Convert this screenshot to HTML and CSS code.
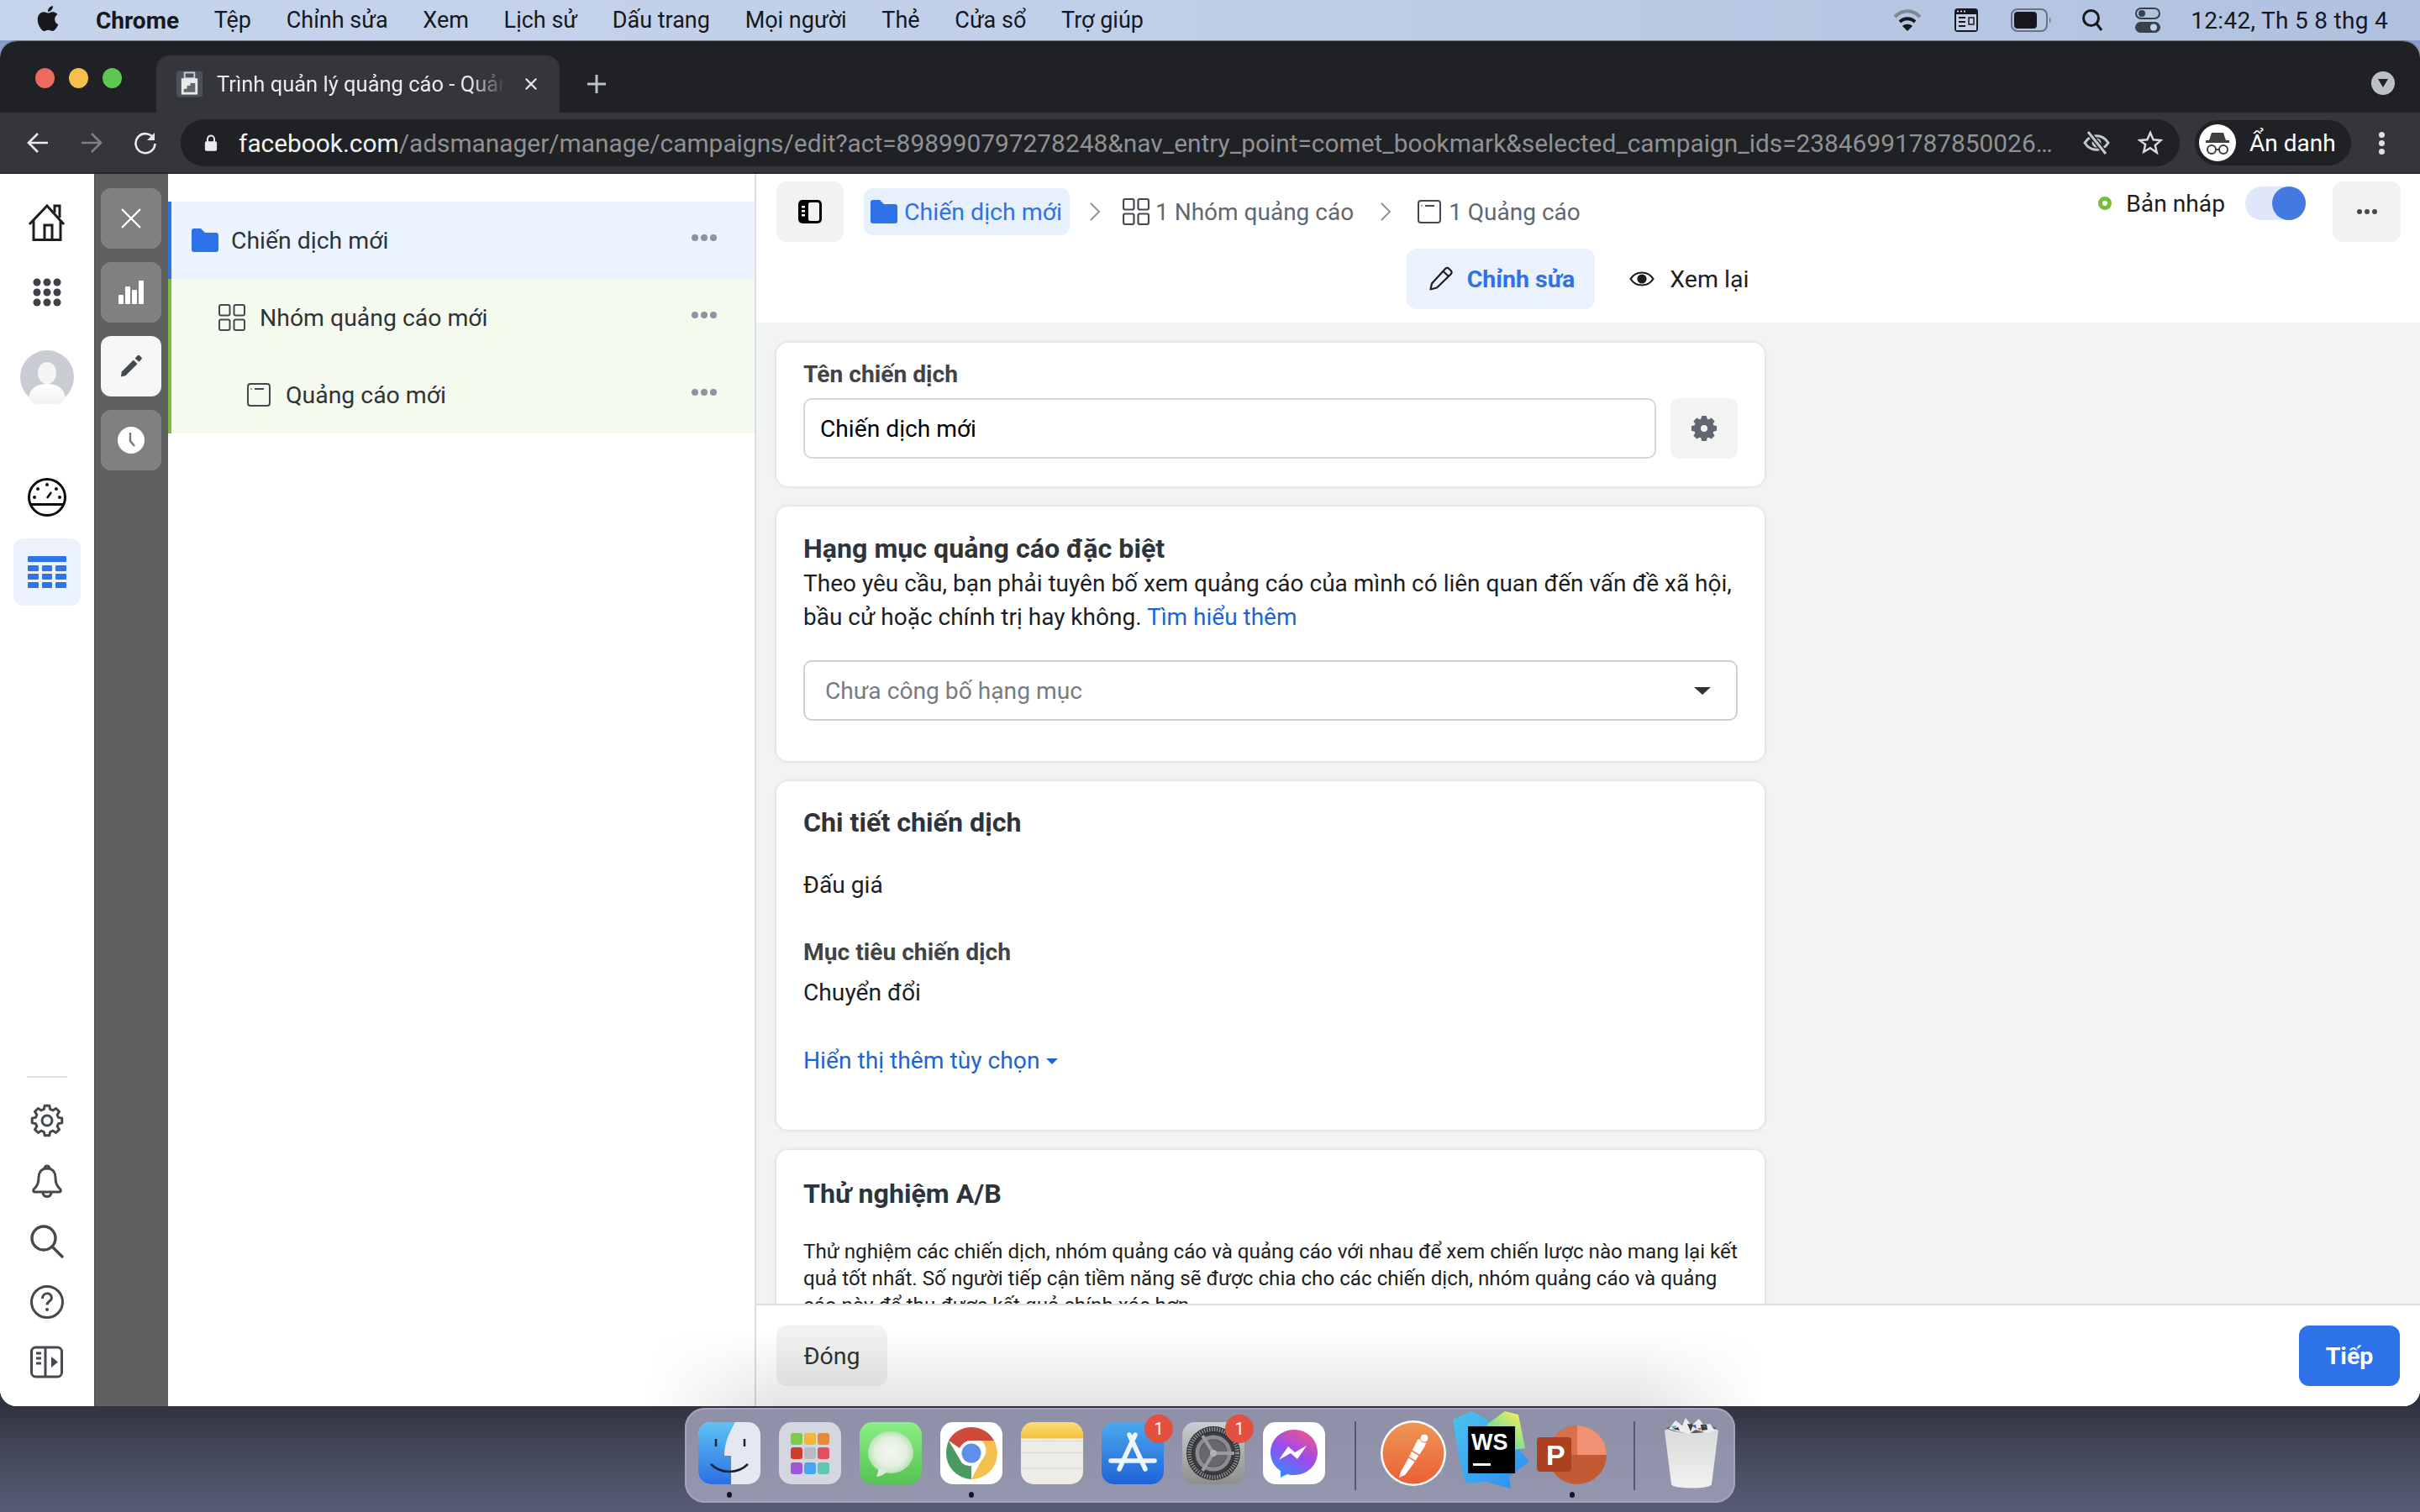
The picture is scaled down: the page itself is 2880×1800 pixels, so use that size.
FILE: index.html
```html
<!DOCTYPE html>
<html lang="vi">
<head>
<meta charset="utf-8">
<title>Trình quản lý quảng cáo</title>
<link rel="stylesheet" href="styles.css">
</head>
<body>
<header class="menubar">
  <svg class="apple" viewBox="0 0 24 24"><path fill="#16181d" d="M12.152 6.896c-.948 0-2.415-1.078-3.96-1.04-2.04.027-3.91 1.183-4.961 3.014-2.117 3.675-.546 9.103 1.519 12.09 1.013 1.454 2.208 3.09 3.792 3.039 1.52-.065 2.09-.987 3.935-.987 1.831 0 2.35.987 3.96.948 1.637-.026 2.676-1.48 3.676-2.948 1.156-1.688 1.636-3.325 1.662-3.415-.039-.013-3.182-1.221-3.22-4.857-.026-3.04 2.48-4.494 2.597-4.559-1.429-2.09-3.623-2.324-4.39-2.376-2-.156-3.675 1.09-4.61 1.09zM15.53 3.83c.843-1.012 1.4-2.427 1.245-3.83-1.207.052-2.662.805-3.532 1.818-.78.896-1.454 2.338-1.273 3.714 1.338.104 2.715-.688 3.559-1.701"/></svg>
  <nav class="menus">
    <span class="menu-app">Chrome</span><span>Tệp</span><span>Chỉnh sửa</span><span>Xem</span><span>Lịch sử</span><span>Dấu trang</span><span>Mọi người</span><span>Thẻ</span><span>Cửa sổ</span><span>Trợ giúp</span>
  </nav>
  <div class="status-icons">
    <svg class="si-wifi" viewBox="0 0 34 28" fill="none"><path d="M2 10C11 1 23 1 32 10" stroke="#7f8795" stroke-width="4"/><path d="M8 16C13 11 21 11 26 16" stroke="#16181d" stroke-width="4"/><path d="M17 27l-6-6c3-3 9-3 12 0z" fill="#16181d"/></svg>
    <svg class="si-cmd" viewBox="0 0 30 30"><rect x="1" y="1" width="28" height="28" rx="4" fill="#16181d"/><rect x="3" y="8" width="24" height="19" fill="#c3cfe6"/><path d="M6 12h8M6 17h8M6 22h8" stroke="#16181d" stroke-width="2"/><circle cx="5" cy="4.500" r="1" fill="#fff"/><circle cx="9" cy="4.500" r="1" fill="#fff"/><circle cx="13" cy="4.500" r="1" fill="#fff"/><path d="M18 12h6v8h-6zM18 12a2 2 0 1 1-0 0M24 20a2 2 0 1 1 0 0" fill="none" stroke="#16181d" stroke-width="1.500"/></svg>
    <svg class="si-batt" viewBox="0 0 48 28"><rect x="1" y="1" width="42" height="26" rx="7" fill="none" stroke="#6b7282" stroke-width="2"/><rect x="4" y="4" width="27" height="20" rx="4" fill="#16181d"/><path d="M46 10c2 2 2 6 0 8z" fill="#6b7282"/></svg>
    <svg class="si-search" viewBox="0 0 26 28" fill="none" stroke="#16181d" stroke-width="3"><circle cx="11.500" cy="11.500" r="9"/><path d="M18 18l6 8"/></svg>
    <svg class="si-ctrl" viewBox="0 0 30 30"><rect x="1" y="1" width="28" height="12" rx="6" fill="none" stroke="#3a3f4c" stroke-width="2"/><circle cx="8" cy="7" r="4" fill="#3a3f4c"/><rect x="0" y="17" width="30" height="13" rx="6.500" fill="#3a3f4c"/><circle cx="22" cy="23.500" r="4" fill="#c3cfe6"/></svg>
    <span class="clock">12:42, Th 5 8 thg 4</span>
  </div>
</header>

<div class="window">
  <div class="tabstrip">
    <div class="lights"><i class="l-red"></i><i class="l-yellow"></i><i class="l-green"></i></div>
    <div class="tab">
      <svg class="favicon" viewBox="0 0 32 32"><rect width="32" height="32" rx="3" fill="#4b505c"/><rect x="10" y="2" width="12" height="7" fill="none" stroke="#c9ccd2" stroke-width="2"/><rect x="6" y="9" width="20" height="20" fill="#e8e9eb"/><path d="M9 26v-4h4v-4h4v-3h6v11z" fill="#63666e"/></svg>
      <span class="tab-title">Trình quản lý quảng cáo - Quản lý</span>
      <svg class="tab-x" viewBox="0 0 18 18"><path d="M2 2l14 14M16 2L2 16" stroke="#e8eaed" stroke-width="2.400"/></svg>
    </div>
    <svg class="tab-plus" viewBox="0 0 24 24"><path d="M12 1v22M1 12h22" stroke="#bdc1c6" stroke-width="3"/></svg>
    <div class="tab-down"><i></i></div>
  </div>
  <div class="toolbar">
    <svg class="tb-icon" viewBox="0 0 28 28" fill="none" stroke="#e8eaed" stroke-width="2.600"><path d="M26 14H3M14 3L3 14l11 11"/></svg>
    <svg class="tb-icon" viewBox="0 0 28 28" fill="none" stroke="#7d8084" stroke-width="2.600"><path d="M2 14h23M14 3l11 11-11 11"/></svg>
    <svg class="tb-icon" viewBox="0 0 28 28" fill="none" stroke="#e8eaed" stroke-width="2.600"><path d="M24 9A11.500 11.500 0 1 0 25.500 15"/><path d="M25 2v9h-9" stroke-width="0" fill="#e8eaed"/></svg>
    <div class="omnibox">
      <svg class="lock" viewBox="0 0 18 24"><path d="M4.500 11V7a4.500 4.500 0 0 1 9 0v4" fill="none" stroke="#e8eaed" stroke-width="2.200"/><rect x="1" y="10" width="16" height="13" rx="2" fill="#e8eaed"/></svg>
      <div class="url"><b>facebook.com</b>/adsmanager/manage/campaigns/edit?act=898990797278248&amp;nav_entry_point=comet_bookmark&amp;selected_campaign_ids=23846991787850026…</div>
      <svg class="om-eye" viewBox="0 0 32 30" fill="none" stroke="#c4c7cb" stroke-width="3"><path d="M2 15c7-11 21-11 28 0-7 11-21 11-28 0z"/><circle cx="16" cy="15" r="4" fill="#c4c7cb"/><path d="M6 2l21 26" stroke="#202124" stroke-width="6"/><path d="M6 2l21 26"/></svg>
      <svg class="om-star" viewBox="0 0 30 30" fill="none" stroke="#dadce0" stroke-width="2.400"><path d="M15 3l3.600 8.300 9 .8-6.800 5.900 2 8.800L15 21.200 7.200 25.800l2-8.800L2.400 12.100l9-.8z"/></svg>
    </div>
    <div class="incog">
      <svg class="incog-ic" viewBox="0 0 44 44"><circle cx="22" cy="22" r="22" fill="#fff"/><path d="M15 10h14l3 9H12z" fill="#3c4043"/><rect x="8" y="19" width="28" height="3" fill="#3c4043"/><g fill="none" stroke="#3c4043" stroke-width="2"><circle cx="15" cy="30" r="5"/><circle cx="29" cy="30" r="5"/><path d="M20 30h4"/></g></svg>
      <span>Ẩn danh</span>
    </div>
    <div class="kebab"><i></i><i></i><i></i></div>
  </div>

  <main class="page">
    <aside class="leftnav">
      <div class="nav-top">
        <svg class="n-home" viewBox="0 0 46 44" fill="none" stroke="#1c1e21" stroke-width="3"><path d="M2 24L23 2l20 22"/><path d="M32 10V2h6v14"/><path d="M7 19v23.500h32V19"/><path d="M20 42V25h9v17"/></svg>
        <svg class="n-dots" viewBox="0 0 34 34" fill="#3e4148"><circle cx="5" cy="5" r="4.500"/><circle cx="17" cy="5" r="4.500"/><circle cx="29" cy="5" r="4.500"/><circle cx="5" cy="17" r="4.500"/><circle cx="17" cy="17" r="4.500"/><circle cx="29" cy="17" r="4.500"/><circle cx="5" cy="29" r="4.500"/><circle cx="17" cy="29" r="4.500"/><circle cx="29" cy="29" r="4.500"/></svg>
        <svg class="n-avatar" viewBox="0 0 64 64"><defs><linearGradient id="av" x1="0" y1="0" x2="0" y2="1"><stop offset="0" stop-color="#fff"/><stop offset="1" stop-color="#eef0f3"/></linearGradient></defs><circle cx="32" cy="32" r="32" fill="#c9ccd3"/><ellipse cx="32" cy="27" rx="11" ry="13" fill="#f4f5f6"/><path d="M10 58c1-13 10-18 22-18s21 5 22 18a32 32 0 0 1-44 0z" fill="url(#av)"/></svg>
        <svg class="n-gauge" viewBox="0 0 46 46" fill="none" stroke="#0b0b0b" stroke-width="3"><circle cx="23" cy="23" r="21.500"/><path d="M3 31.500h40"/><path d="M23 24l5-7" stroke-width="2.500"/><g fill="#0b0b0b" stroke="none"><circle cx="23" cy="8" r="2"/><circle cx="12" cy="13" r="2"/><circle cx="34" cy="13" r="2"/><circle cx="8" cy="23" r="2"/><circle cx="38" cy="23" r="2"/></g></svg>
        <div class="n-table">
          <svg viewBox="0 0 46 38" fill="#2f74e8"><rect width="46" height="7" rx="1"/><rect y="11" width="13" height="7" rx="1"/><rect x="17" y="11" width="12" height="7" rx="1"/><rect x="33" y="11" width="13" height="7" rx="1"/><rect y="21" width="13" height="7" rx="1"/><rect x="17" y="21" width="12" height="7" rx="1"/><rect x="33" y="21" width="13" height="7" rx="1"/><rect y="31" width="13" height="7" rx="1"/><rect x="17" y="31" width="12" height="7" rx="1"/><rect x="33" y="31" width="13" height="7" rx="1"/></svg>
        </div>
      </div>
      <div class="nav-bottom">
        <div class="n-sep"></div>
        <svg class="n-ic" viewBox="0 0 40 40" fill="none" stroke="#444950" stroke-width="3" stroke-linejoin="round"><circle cx="20" cy="20" r="6"/><path d="M16.380 6.480L17.180 2.220H22.820L23.620 6.480L27 7.880L30.580 5.440L34.560 9.420L32.120 13L33.520 16.380L37.780 17.180V22.820L33.520 23.620L32.120 27L34.560 30.580L30.580 34.560L27 32.120L23.620 33.520L22.820 37.780H17.180L16.380 33.520L13 32.120L9.420 34.560L5.440 30.580L7.880 27L6.480 23.620L2.220 22.820V17.180L6.480 16.380L7.880 13L5.440 9.420L9.420 5.440L13 7.880z"/></svg>
        <svg class="n-ic" viewBox="0 0 40 40" fill="none" stroke="#444950" stroke-width="3" stroke-linejoin="round"><path d="M20 5c-7 0-10 5-10 11 0 7-2 10-6 14-1 2 0 3 2 3h28c2 0 3-1 2-3-4-4-6-7-6-14 0-6-3-11-10-11z"/><path d="M17 5a3 3 0 0 1 6 0M15 34c1 6 9 6 10 0"/></svg>
        <svg class="n-ic" viewBox="0 0 40 40" fill="none" stroke="#444950" stroke-width="3.400"><circle cx="16" cy="16" r="14"/><path d="M26 26l12 12" stroke-linecap="round"/></svg>
        <svg class="n-ic" viewBox="0 0 40 40" fill="none" stroke="#444950" stroke-width="3"><circle cx="20" cy="20" r="18.500"/><path d="M14.500 16c0-8 11-8 11-1 0 4-5.500 4-5.500 8.500"/><circle cx="20" cy="29" r="2" fill="#444950" stroke="none"/></svg>
        <svg class="n-ic" viewBox="0 0 40 40" fill="none" stroke="#444950" stroke-width="3"><rect x="1.500" y="2" width="36" height="35" rx="5"/><path d="M18 2v35M7 9h6M7 15h6M7 21h6"/><path d="M25 13l8 6.500-8 6.500z" fill="#444950" stroke="none"/></svg>
      </div>
    </aside>

    <aside class="rail">
      <div class="rail-btn"><svg viewBox="0 0 26 26" fill="none" stroke="#fff" stroke-width="2.200"><path d="M2 2l22 22M24 2L2 24"/></svg></div>
      <div class="rail-btn"><svg viewBox="0 0 30 28" fill="#fff"><rect x="0" y="17" width="6" height="11" rx="1"/><rect x="8" y="7" width="6" height="21" rx="1"/><rect x="16" y="11" width="6" height="17" rx="1"/><rect x="24" y="0" width="6" height="28" rx="1"/></svg></div>
      <div class="rail-btn rail-on"><svg viewBox="0 0 30 30" fill="#444950"><path d="M3 22L18 7l5 5L8 27l-6 1.500z"/><path d="M20 5l3-3.500c1-1 2-1 3 0l2 2c1 1 1 2 0 3l-3 3z"/></svg></div>
      <div class="rail-btn"><svg viewBox="0 0 32 32"><circle cx="16" cy="16" r="16" fill="#fff"/><path d="M15 7v10l5 6" fill="none" stroke="#777" stroke-width="2.400"/></svg></div>
    </aside>

    <section class="tree">
      <div class="tree-row row-camp">
        <svg class="t-folder" viewBox="0 0 32 28"><path d="M0 3a3 3 0 0 1 3-3h8l5 5h13a3 3 0 0 1 3 3v17a3 3 0 0 1-3 3H3a3 3 0 0 1-3-3z" fill="#2d72e8"/></svg>
        <span>Chiến dịch mới</span>
        <div class="more-dots"><i></i><i></i><i></i></div>
      </div>
      <div class="tree-row row-set">
        <svg class="t-group" viewBox="0 0 32 32" fill="none" stroke="#444950" stroke-width="2"><rect x="1" y="1" width="12.500" height="12.500" rx="2"/><rect x="18.500" y="1" width="12.500" height="12.500" rx="2"/><rect x="1" y="18.500" width="12.500" height="12.500" rx="2"/><rect x="18.500" y="18.500" width="12.500" height="12.500" rx="2"/></svg>
        <span>Nhóm quảng cáo mới</span>
        <div class="more-dots"><i></i><i></i><i></i></div>
      </div>
      <div class="tree-row row-ad">
        <svg class="t-ad" viewBox="0 0 28 28" fill="none" stroke="#444950" stroke-width="2"><rect x="1" y="1" width="26" height="26" rx="3"/><path d="M9 7h11M4.500 7h1"/></svg>
        <span>Quảng cáo mới</span>
        <div class="more-dots"><i></i><i></i><i></i></div>
      </div>
    </section>

    <section class="editor">
      <div class="topbar">
        <div class="crumbs">
          <div class="icon-btn panel-btn"><svg viewBox="0 0 30 30"><rect x="1" y="1" width="28" height="28" rx="5" fill="#000"/><rect x="13" y="4" width="13" height="22" rx="2" fill="#f2f2f2"/><rect x="5" y="8" width="4" height="2.500" fill="#fff"/><rect x="5" y="13" width="4" height="2.500" fill="#fff"/><rect x="5" y="18" width="4" height="2.500" fill="#fff"/></svg></div>
          <div class="crumb crumb-on"><svg class="c-folder" viewBox="0 0 32 28"><path d="M0 3a3 3 0 0 1 3-3h8l5 5h13a3 3 0 0 1 3 3v17a3 3 0 0 1-3 3H3a3 3 0 0 1-3-3z" fill="#2d72e8"/></svg><span>Chiến dịch mới</span></div>
          <svg class="chev chev-a" viewBox="0 0 14 24" fill="none" stroke="#8d949e" stroke-width="2"><path d="M2 2l10 10L2 22"/></svg>
          <div class="crumb"><svg class="c-group" viewBox="0 0 32 32" fill="none" stroke="#444950" stroke-width="2.200"><rect x="1" y="1" width="12.500" height="12.500" rx="2"/><rect x="18.500" y="1" width="12.500" height="12.500" rx="2"/><rect x="1" y="18.500" width="12.500" height="12.500" rx="2"/><rect x="18.500" y="18.500" width="12.500" height="12.500" rx="2"/></svg><span>1 Nhóm quảng cáo</span></div>
          <svg class="chev chev-b" viewBox="0 0 14 24" fill="none" stroke="#8d949e" stroke-width="2"><path d="M2 2l10 10L2 22"/></svg>
          <div class="crumb"><svg class="c-ad" viewBox="0 0 28 28" fill="none" stroke="#444950" stroke-width="2"><rect x="1" y="1" width="26" height="26" rx="3"/><path d="M9 7h11M4.500 7h1"/></svg><span>1 Quảng cáo</span></div>
          <div class="status">
            <i class="status-dot"></i><span>Bản nháp</span>
            <div class="toggle"><i></i></div>
          </div>
          <div class="icon-btn more-btn"><div class="more-dots dark"><i></i><i></i><i></i></div></div>
        </div>
        <div class="tabs">
          <div class="mode mode-on"><svg viewBox="0 0 30 30" fill="none" stroke="#1c1e21" stroke-width="2.200" stroke-linejoin="round"><path d="M2.500 27.500l1.500-7L20 3c1.500-1.500 3-1.500 4.500 0l2 2c1.500 1.500 1.500 3 0 4.500L10 25.500z"/><path d="M17.500 6l6.500 6"/></svg><span>Chỉnh sửa</span></div>
          <div class="mode mode-off"><svg viewBox="0 0 30 20" fill="none" stroke="#1c1e21" stroke-width="2.200"><path d="M1.500 10C8 0 22 0 28.500 10 22 20 8 20 1.500 10z"/><circle cx="15" cy="10" r="4.500" fill="#1c1e21"/></svg><span>Xem lại</span></div>
        </div>
      </div>

      <div class="scroll">
        <div class="card card-name">
          <label class="label">Tên chiến dịch</label>
          <div class="name-row">
            <div class="input">Chiến dịch mới</div>
            <div class="gear-btn"><svg viewBox="0 0 40 40" fill="#606770" stroke="#606770" stroke-width="2" stroke-linejoin="round"><path fill-rule="evenodd" d="M16.380 6.480L17.180 2.220H22.820L23.620 6.480L27 7.880L30.580 5.440L34.560 9.420L32.120 13L33.520 16.380L37.780 17.180V22.820L33.520 23.620L32.120 27L34.560 30.580L30.580 34.560L27 32.120L23.620 33.520L22.820 37.780H17.180L16.380 33.520L13 32.120L9.420 34.560L5.440 30.580L7.880 27L6.480 23.620L2.220 22.820V17.180L6.480 16.380L7.880 13L5.440 9.420L9.420 5.440L13 7.880zM20 14a6 6 0 1 0 0 12 6 6 0 0 0 0-12z"/></svg></div>
          </div>
        </div>

        <div class="card card-special">
          <h2>Hạng mục quảng cáo đặc biệt</h2>
          <p class="desc">Theo yêu cầu, bạn phải tuyên bố xem quảng cáo của mình có liên quan đến vấn đề xã hội, bầu cử hoặc chính trị hay không. <a>Tìm hiểu thêm</a></p>
          <div class="select"><span>Chưa công bố hạng mục</span><i class="caret"></i></div>
        </div>

        <div class="card card-detail">
          <h2>Chi tiết chiến dịch</h2>
          <div class="line l-buy">Đấu giá</div>
          <div class="line l-obj">Mục tiêu chiến dịch</div>
          <div class="line l-val">Chuyển đổi</div>
          <div class="line l-more"><a>Hiển thị thêm tùy chọn</a><i class="caret-sm"></i></div>
        </div>

        <div class="card card-ab">
          <h2>Thử nghiệm A/B</h2>
          <p class="ab-text">Thử nghiệm các chiến dịch, nhóm quảng cáo và quảng cáo với nhau để xem chiến lược nào mang lại kết quả tốt nhất. Số người tiếp cận tiềm năng sẽ được chia cho các chiến dịch, nhóm quảng cáo và quảng cáo này để thu được kết quả chính xác hơn.</p>
        </div>
      </div>

      <footer class="footer">
        <div class="btn-close">Đóng</div>
        <div class="btn-next">Tiếp</div>
      </footer>
    </section>
  </main>
  <div class="dock-glow"></div>
</div>

<div class="dock">
  <div class="dk running">
    <svg viewBox="0 0 74 74"><defs><linearGradient id="fd1" x1="0" y1="0" x2="0" y2="1"><stop offset="0" stop-color="#5ec3f5"/><stop offset="1" stop-color="#2b6fe3"/></linearGradient></defs><rect width="74" height="74" rx="15" fill="#e4e8f1"/><path d="M15 0H44C36 14 31 26 31 40h8v34H15A15 15 0 0 1 0 59V15A15 15 0 0 1 15 0z" fill="url(#fd1)"/><path d="M15 50c12 12 32 12 44 0" fill="none" stroke="#15233a" stroke-width="2.500"/><path d="M21 20v9M55 20v9" stroke="#15233a" stroke-width="2.500"/></svg>
  </div>
  <div class="dk">
    <svg viewBox="0 0 74 74"><rect width="74" height="74" rx="15" fill="#d4d7e0"/><rect x="14" y="13" width="14" height="14" rx="3" fill="#7ecb4a"/><rect x="30" y="13" width="14" height="14" rx="3" fill="#f1b736"/><rect x="46" y="13" width="14" height="14" rx="3" fill="#e58a36"/><rect x="14" y="30" width="14" height="14" rx="3" fill="#cf3c30"/><rect x="30" y="30" width="14" height="14" rx="3" fill="#b6bcc6"/><rect x="46" y="30" width="14" height="14" rx="3" fill="#e14f63"/><rect x="14" y="48" width="14" height="14" rx="3" fill="#9e59d8"/><rect x="30" y="48" width="14" height="14" rx="3" fill="#47a6f0"/><rect x="46" y="48" width="14" height="14" rx="3" fill="#5fc7b0"/></svg>
  </div>
  <div class="dk">
    <svg viewBox="0 0 74 74"><defs><linearGradient id="ms" x1="0" y1="0" x2="0" y2="1"><stop offset="0" stop-color="#8bf087"/><stop offset="1" stop-color="#55c253"/></linearGradient><radialGradient id="ms2"><stop offset="0" stop-color="#f2f6f1"/><stop offset="0.700" stop-color="#e2efdf"/><stop offset="1" stop-color="#b9e3b5"/></radialGradient></defs><rect width="74" height="74" rx="15" fill="url(#ms)"/><ellipse cx="37" cy="36" rx="27" ry="25" fill="url(#ms2)"/><path d="M23 55l-3 10c7-1 11-4 13-7z" fill="#dcecd9"/></svg>
  </div>
  <div class="dk running">
    <svg viewBox="0 0 74 74"><rect width="74" height="74" rx="15" fill="#fff"/><path d="M37 6a31 31 0 0 1 27 16H37a15 15 0 0 0-14 9L10 22A31 31 0 0 1 37 6z" fill="#cf4a3a"/><path d="M64 22a31 31 0 0 1-27 46l12-23a15 15 0 0 0 0-23z" fill="#f2c150"/><path d="M7 37c0-5 1-10 3-15l16 27a15 15 0 0 0 11 3L37 68A31 31 0 0 1 7 37z" fill="#4b9a62"/><circle cx="37" cy="37" r="15" fill="#fff"/><circle cx="37" cy="37" r="11.500" fill="#5f8fe8"/></svg>
  </div>
  <div class="dk">
    <svg viewBox="0 0 74 74"><defs><linearGradient id="nt" x1="0" y1="0" x2="0" y2="1"><stop offset="0" stop-color="#f9dd76"/><stop offset="1" stop-color="#f5c33f"/></linearGradient></defs><rect width="74" height="74" rx="15" fill="#eeece6"/><path d="M0 19V15A15 15 0 0 1 15 0h44a15 15 0 0 1 15 15v4z" fill="url(#nt)"/><path d="M0 18.500h74" stroke="#f5c33f" stroke-width="2"/><path d="M0 22.500h74" stroke="#bdbbb5" stroke-width="1" stroke-dasharray="1 1.500"/><path d="M0 36.500h74M0 55h74" stroke="#dcdad4" stroke-width="1.500"/></svg>
  </div>
  <div class="dk">
    <svg viewBox="0 0 74 74"><defs><linearGradient id="as" x1="0" y1="0" x2="0" y2="1"><stop offset="0" stop-color="#4ba8ee"/><stop offset="1" stop-color="#1f63d8"/></linearGradient></defs><rect width="74" height="74" rx="15" fill="url(#as)"/><path d="M40 15L21 56M33 15l19 41M11 46h52" stroke="#eef4fb" stroke-width="5.500" stroke-linecap="round" fill="none"/></svg>
    <b class="badge">1</b>
  </div>
  <div class="dk">
    <svg viewBox="0 0 74 74"><defs><linearGradient id="sp" x1="0" y1="0" x2="0" y2="1"><stop offset="0" stop-color="#c8cfd3"/><stop offset="1" stop-color="#8f8e8a"/></linearGradient></defs><rect width="74" height="74" rx="15" fill="url(#sp)"/><circle cx="37" cy="37" r="32" fill="#2e2f31"/><circle cx="37" cy="37" r="28.500" fill="none" stroke="#8f9195" stroke-width="5" stroke-dasharray="1.500 1.500"/><circle cx="37" cy="37" r="25" fill="#3c3d40"/><circle cx="37" cy="37" r="19" fill="none" stroke="#8a8c90" stroke-width="5"/><circle cx="37" cy="37" r="16" fill="#66686c"/><path d="M37 37L24 16M37 37h25M37 37L24 58" stroke="#9a9ca0" stroke-width="4"/><circle cx="37" cy="37" r="4" fill="#b0b2b5"/></svg>
    <b class="badge">1</b>
  </div>
  <div class="dk">
    <svg viewBox="0 0 74 74"><defs><linearGradient id="mg" x1="0.200" y1="1" x2="0.800" y2="0"><stop offset="0" stop-color="#2f8ffb"/><stop offset="0.500" stop-color="#9a4bf0"/><stop offset="1" stop-color="#f0558b"/></linearGradient></defs><rect width="74" height="74" rx="15" fill="#fff"/><path d="M37 9c16 0 28 12 28 27S53 63 37 63c-3 0-5 0-8-1l-8 4v-8C13 53 9 45 9 36 9 21 21 9 37 9z" fill="url(#mg)"/><path d="M19 45l11-16 8 7 14-8-11 16-8-7z" fill="#fff"/></svg>
  </div>
  <div class="dk-sep"></div>
  <div class="dk dk-post">
    <svg viewBox="0 0 80 80"><defs><linearGradient id="pm" x1="0" y1="0" x2="0" y2="1"><stop offset="0" stop-color="#ee9656"/><stop offset="1" stop-color="#ec5f34"/></linearGradient></defs><circle cx="40" cy="40" r="39" fill="#fff"/><circle cx="40" cy="40" r="36.500" fill="url(#pm)"/><path d="M45 24l7-3 3 7-2 5-14 21-9 12-7 3 2-7 8-14z" fill="#fff"/><circle cx="53" cy="22" r="5" fill="#fff" stroke="#ec7a44"/><path d="M33 44l12 7M38 37l10 6" stroke="#ec7a44" stroke-width="1.500"/></svg>
  </div>
  <div class="dk dk-ws">
    <svg viewBox="0 0 92 92"><defs><linearGradient id="ws1" x1="0" y1="0" x2="1" y2="1"><stop offset="0" stop-color="#4cc3ee"/><stop offset="1" stop-color="#2b8df3"/></linearGradient><linearGradient id="ws2" x1="0" y1="1" x2="0.800" y2="0"><stop offset="0" stop-color="#22d3c4"/><stop offset="1" stop-color="#f5ef59"/></linearGradient></defs><path d="M0 10L22 0 38 8l12 10 18 14 23 28-24 18 2 14-30-8-24 2-8-32z" fill="url(#ws1)"/><path d="M40 16L62 0l16 4 8 40-26 4z" fill="url(#ws2)"/><rect x="18" y="18" width="56" height="56" fill="#000"/><text x="22" y="46" class="ws-t">WS</text><rect x="24" y="62" width="21" height="3" fill="#fff"/></svg>
  </div>
  <div class="dk running dk-ppt">
    <svg viewBox="0 0 84 74"><circle cx="48" cy="37" r="35" fill="#c25a35"/><path d="M48 2a35 35 0 0 1 35 35H48z" fill="#ef9172"/><path d="M48 2a35 35 0 0 0-35 35h35z" fill="#d9704c"/><rect x="0" y="16" width="41" height="41" rx="4" fill="#ad4020"/><text x="11" y="49" class="ppt-t">P</text></svg>
  </div>
  <div class="dk-sep dk-sep2"></div>
  <div class="dk dk-trash">
    <svg viewBox="0 0 66 86"><defs><linearGradient id="tr" x1="0" y1="0" x2="0" y2="1"><stop offset="0" stop-color="#d9dadb"/><stop offset="1" stop-color="#f1f1f0"/></linearGradient></defs><path d="M1 16c8-6 56-6 64 0l-8 64c-1 6-47 6-48 0z" fill="url(#tr)"/><path d="M3 13c14-7 46-7 60 0-12 8-48 8-60 0z" fill="#5c5e64"/><path d="M6 14L14 4l8 6 4-9 7 9 9-8 5 7 8-1 6 8-9 3-14-4-8 5-14-3z" fill="#ececec"/><path d="M10 14l7-2 2 4zM28 8l7 1-3 8zM44 9l7 0 1 6-7 1z" fill="#3a3c44"/><path d="M33 10l5-1 1 5zM46 10l4 0-1 3z" fill="#2e6bc0"/><path d="M8 11l7-1-2 4z" fill="#4cc3a0"/><path d="M40 13l5 0-2 3z" fill="#c4603a"/></svg>
  </div>
</div>
</body>
</html>
```

FILE: styles.css
```css
* { box-sizing: border-box; }
html, body { margin: 0; padding: 0; }
body {
  width: 2880px;
  height: 1800px;
  overflow: hidden;
  display: flex;
  flex-direction: column;
  align-items: stretch;
  font-family: "Roboto", "Liberation Sans", sans-serif;
  color: #1c1e21;
  background: linear-gradient(180deg, #7f9ac9 0, #8aa0c8 100px, #30333f 1674px, #484c60 1740px, #575c74 1800px);
}
i { display: block; font-style: normal; }
a { color: #1b64d8; }

/* macOS menu bar */
.menubar {
  height: 48px;
  flex: none;
  display: flex;
  align-items: center;
  padding-left: 42px;
  background: linear-gradient(90deg, #c5d3eb, #c0cfe8 50%, #b0c1df);
  font-size: 27px;
  color: #16181d;
}
.apple { width: 30px; height: 32px; margin-top: -4px; }
.menus { display: flex; gap: 41.700px; margin-left: 42px; }
.menu-app { font-weight: 700; font-size: 28px; }
.status-icons { margin-left: auto; display: flex; align-items: center; position: relative; height: 48px; padding-right: 38px; }
.status-icons svg { flex: none; }
.si-wifi { width: 34px; height: 28px; margin-right: 38px; }
.si-cmd { width: 30px; height: 30px; margin-right: 38px; }
.si-batt { width: 48px; height: 28px; margin-right: 36px; }
.si-search { width: 26px; height: 28px; margin-right: 38px; }
.si-ctrl { width: 30px; height: 30px; margin-right: 36px; }
.clock { white-space: nowrap; font-size: 28px; letter-spacing: .3px; }

/* Browser window */
.window {
  position: relative;
  flex: none;
  height: 1625px;
  margin-top: 1px;
  display: flex;
  flex-direction: column;
  border-radius: 20px 20px 20px 20px;
  overflow: hidden;
  background: #fff;
  box-shadow: 0 -1px 0 #6f7480;
}
.tabstrip {
  height: 85px;
  flex: none;
  display: flex;
  align-items: flex-end;
  background: #202124;
  position: relative;
}
.lights { display: flex; gap: 17px; padding: 0 0 29px 42px; width: 186px; align-self: flex-end; }
.lights i { width: 23px; height: 24px; border-radius: 50%; }
.l-red { background: #ec6a5e; }
.l-yellow { background: #f4bf4f; }
.l-green { background: #61c554; }
.tab {
  width: 480px;
  height: 68px;
  background: #35363a;
  border-radius: 16px 16px 0 0;
  display: flex;
  align-items: center;
  padding: 0 26px 0 24px;
  color: #e8eaed;
  font-size: 25.500px;
}
.favicon { width: 31px; height: 32px; flex: none; }
.tab-title {
  width: 352px;
  margin-left: 17px;
  white-space: nowrap;
  overflow: hidden;
  -webkit-mask-image: linear-gradient(90deg, #000 86%, transparent 98%);
  mask-image: linear-gradient(90deg, #000 86%, transparent 98%);
}
.tab-x { width: 16px; height: 16px; margin-left: 16px; flex: none; }
.tab-plus { width: 24px; height: 24px; margin: 0 0 22px 32px; }
.tab-down {
  margin: 0 30px 21px auto;
  width: 28px;
  height: 28px;
  border-radius: 50%;
  background: #bdc1c6;
  display: flex;
  align-items: center;
  justify-content: center;
}
.tab-down i { width: 0; height: 0; border: 6px solid transparent; border-top: 10px solid #202124; border-bottom: 0; }

.toolbar {
  height: 73px;
  flex: none;
  display: flex;
  align-items: center;
  background: #35363a;
  border-bottom: 2px solid #26272a;
  padding: 1px 0 0 31px;
}
.tb-icon { width: 28px; height: 28px; margin-right: 36px; flex: none; }
.tb-icon:nth-child(3) { margin-right: 28px; }
.omnibox {
  width: 2379px;
  height: 56px;
  flex: none;
  border-radius: 28px;
  background: #202124;
  display: flex;
  align-items: center;
  padding-left: 28px;
  font-size: 29.850px;
  color: #8f9195;
}
.lock { width: 16px; height: 24px; flex: none; }
.url { width: 2158px; margin-left: 25px; white-space: nowrap; overflow: hidden; }
.url b { font-weight: 400; color: #f1f3f4; }
.om-eye { width: 32px; height: 30px; margin-left: 37px; flex: none; }
.om-star { width: 30px; height: 30px; margin-left: 33px; flex: none; }
.incog {
  width: 186px;
  height: 54px;
  margin-left: 18px;
  border-radius: 27px;
  background: #202124;
  display: flex;
  align-items: center;
  padding-left: 5px;
  color: #fff;
  font-size: 28px;
  flex: none;
}
.incog-ic { width: 44px; height: 44px; flex: none; }
.incog span { margin-left: 16px; }
.kebab { margin-left: 33px; display: flex; flex-direction: column; gap: 3px; }
.kebab i { width: 7px; height: 7px; border-radius: 50%; background: #dfe1e5; }

/* Page */
.page { flex: 1; min-height: 0; display: flex; background: #fff; }
.leftnav {
  width: 112px;
  flex: none;
  display: flex;
  flex-direction: column;
  justify-content: space-between;
  align-items: center;
}
.nav-top { display: flex; flex-direction: column; align-items: center; padding-top: 36px; }
.n-home { width: 46px; height: 44px; }
.n-dots { width: 34px; height: 34px; margin-top: 44px; }
.n-avatar { width: 64px; height: 64px; margin-top: 52px; }
.n-gauge { width: 46px; height: 46px; margin-top: 88px; }
.n-table {
  width: 80px;
  height: 80px;
  margin-top: 26px;
  border-radius: 12px;
  background: #ebf1fd;
  display: flex;
  align-items: center;
  justify-content: center;
}
.n-table svg { width: 46px; height: 38px; }
.nav-bottom { display: flex; flex-direction: column; align-items: center; padding-bottom: 32px; }
.n-sep { width: 48px; height: 2px; background: #dddfe4; margin-bottom: 31px; }
.n-ic { width: 40px; height: 40px; }
.n-ic + .n-ic { margin-top: 32px; }

.rail {
  width: 88px;
  flex: none;
  background: #606060;
  border-left: 2px solid #555;
  padding: 17px 0 0 6px;
  display: flex;
  flex-direction: column;
  gap: 16px;
}
.rail-btn {
  width: 72px;
  height: 72px;
  border-radius: 12px;
  background: #808080;
  display: flex;
  align-items: center;
  justify-content: center;
}
.rail-btn svg { width: 30px; height: 28px; }
.rail-btn:nth-child(1) svg { width: 26px; height: 26px; }
.rail-btn:nth-child(4) svg { width: 32px; height: 32px; }
.rail-on { background: #f7f7f7; }

.tree {
  width: 700px;
  flex: none;
  padding-top: 33px;
  border-right: 2px solid #dadde1;
  font-size: 28.400px;
  color: #303338;
}
.tree-row {
  height: 92px;
  display: flex;
  align-items: center;
  border-left: 4px solid #78be3c;
  background: #f4faee;
  padding-right: 45px;
  white-space: nowrap;
}
.tree-row span { margin-top: 1px; }
.row-camp { border-left-color: #2d72e8; background: #ebf3fe; padding-left: 24px; }
.row-set { padding-left: 56px; }
.row-ad { padding-left: 90px; }
.t-folder { width: 32px; height: 28px; margin-right: 15px; }
.t-group { width: 32px; height: 32px; margin-right: 17px; }
.t-ad { width: 28px; height: 28px; margin-right: 18px; }
.more-dots { margin-left: auto; display: flex; gap: 3px; margin-bottom: 6px; }
.more-dots i { width: 8px; height: 8px; border-radius: 50%; background: #8d949e; }
.more-dots.dark { margin: 0; gap: 3px; }
.more-dots.dark i { width: 6px; height: 6px; background: #444950; }

/* Editor */
.editor { flex: 1; min-width: 0; display: flex; flex-direction: column; }
.topbar { height: 177px; flex: none; padding-top: 9px; background: #fff; }
.crumbs { height: 72px; display: flex; align-items: center; padding: 0 23px 0 24px; }
.icon-btn {
  width: 80px;
  height: 72px;
  flex: none;
  border-radius: 12px;
  background: #f2f2f2;
  display: flex;
  align-items: center;
  justify-content: center;
}
.panel-btn svg { width: 30px; height: 30px; }
.panel-btn { margin-right: 24px; }
.crumb { display: flex; align-items: center; height: 56px; font-size: 28px; color: #606770; white-space: nowrap; }
.crumb-on { background: #e7f0fd; border-radius: 10px; padding: 0 9px 0 8px; color: #2d72e8; font-size: 28.500px; }
.c-folder { width: 32px; height: 28px; margin-right: 8px; }
.c-group { width: 32px; height: 32px; margin-right: 7px; }
.c-ad { width: 28px; height: 28px; margin-right: 9px; }
.chev { width: 14px; height: 24px; flex: none; }
.chev-a { margin: 0 26px 0 23px; }
.chev-b { margin: 0 31px 0 31px; }
.status {
  margin-left: auto;
  height: 40px;
  align-self: flex-start;
  margin-top: 6px;
  display: flex;
  align-items: center;
  font-size: 28.200px;
}
.status-dot { width: 16px; height: 16px; border-radius: 50%; border: 5px solid #78be3c; margin-right: 17px; background: #fff; }
.toggle { width: 72px; height: 40px; border-radius: 20px; background: #dfe8fa; margin: 0 32px 0 24px; position: relative; }
.toggle i { width: 40px; height: 40px; border-radius: 50%; background: #4479e0; margin-left: 32px; }
.more-btn { width: 81px; }
.tabs { display: flex; justify-content: center; gap: 8px; margin-top: 8px; }
.mode {
  height: 72px;
  display: flex;
  align-items: center;
  border-radius: 12px;
  font-size: 28.500px;
  white-space: nowrap;
}
.mode-off { padding: 0 25px 0 33px; }
.mode-off svg { width: 30px; height: 20px; margin-right: 18px; }
.mode-on { background: #ebf1fd; color: #2d72e8; font-weight: 700; padding: 0 24px 0 26px; }
.mode-on svg { width: 30px; height: 30px; margin-right: 16px; }

.scroll {
  flex: 1;
  min-height: 0;
  overflow: hidden;
  background: #f2f3f3;
  padding: 24px;
  display: flex;
  flex-direction: column;
  gap: 24px;
}
.card {
  width: 1176px;
  flex: none;
  background: #fff;
  border-radius: 14px;
  box-shadow: 0 0 5px rgba(0,0,0,.14);
  padding: 0 32px;
  font-size: 28.200px;
  color: #1c1e21;
}
.card h2 { margin: 0; font-size: 32.200px; line-height: 40px; font-weight: 700; color: #303338; }
.card-name { padding-top: 21px; padding-bottom: 33px; }
.label { display: block; font-size: 28.200px; line-height: 34px; font-weight: 700; color: #404348; }
.name-row { display: flex; justify-content: space-between; margin-top: 11px; }
.input {
  width: 1015px;
  height: 72px;
  border: 2px solid #d5d7da;
  border-radius: 10px;
  display: flex;
  align-items: center;
  padding-left: 18px;
  color: #000;
}
.gear-btn {
  width: 80px;
  height: 72px;
  border-radius: 10px;
  background: #f2f3f3;
  display: flex;
  align-items: center;
  justify-content: center;
}
.gear-btn svg { width: 32px; height: 32px; }
.card-special { padding-top: 30px; padding-bottom: 48px; }
.desc { margin: 2px 0 0; font-size: 28px; line-height: 39.500px; color: #1c1e21; }
.select {
  margin-top: 32px;
  height: 72px;
  border: 2px solid #ccd0d5;
  border-radius: 10px;
  display: flex;
  align-items: center;
  justify-content: space-between;
  padding: 0 30px 0 24px;
  color: #777b82;
}
.caret { width: 0; height: 0; border: 10px solid transparent; border-top: 9px solid #303338; border-bottom: 0; }
.card-detail { padding-top: 29px; padding-bottom: 62px; }
.line { line-height: 40px; }
.l-buy { margin-top: 35px; }
.l-obj { margin-top: 40px; font-weight: 700; color: #404348; }
.l-val { margin-top: 8px; }
.l-more { margin-top: 41px; display: flex; align-items: center; }
.caret-sm { width: 0; height: 0; margin-left: 8px; border: 7px solid transparent; border-top: 7px solid #1b64d8; border-bottom: 0; }
.card-ab { padding-top: 32px; padding-bottom: 32px; }
.ab-text { margin: 33px 0 0; font-size: 24.200px; line-height: 32px; color: #1c1e21; }

.footer {
  height: 122px;
  flex: none;
  background: #fff;
  border-top: 2px solid #dddfe1;
  display: flex;
  justify-content: space-between;
  align-items: center;
  padding: 0 24px;
}
.btn-close, .btn-next {
  height: 72px;
  border-radius: 12px;
  display: flex;
  align-items: center;
  justify-content: center;
  font-size: 28.500px;
}
.btn-close { width: 132px; background: #f2f2f2; color: #303338; }
.btn-next { width: 120px; background: #2d72e8; color: #fff; font-weight: 700; }
.dock-glow {
  position: absolute;
  left: 770px;
  right: 780px;
  bottom: 0;
  height: 90px;
  pointer-events: none;
  background: linear-gradient(180deg, rgba(0,0,0,0), rgba(0,0,0,.11));
  -webkit-mask-image: linear-gradient(90deg, transparent, #000 12%, #000 88%, transparent);
  mask-image: linear-gradient(90deg, transparent, #000 12%, #000 88%, transparent);
}

/* Dock */
.dock {
  align-self: flex-start;
  margin: 2px 0 0 815px;
  width: 1250px;
  height: 113px;
  flex: none;
  display: flex;
  padding: 17px 0 0 5px;
  border-radius: 24px;
  background: linear-gradient(180deg, #8d90a6, #9496ae);
  box-shadow: inset 0 0 0 2px #a2a5ba;
}
.dk { width: 96px; height: 74px; flex: none; display: flex; justify-content: center; position: relative; }
.dk svg { width: 74px; height: 74px; overflow: visible; display: block; }
.running::after {
  content: "";
  position: absolute;
  left: 45px;
  top: 83px;
  width: 6px;
  height: 7px;
  border-radius: 50%;
  background: #0f1533;
}
.badge {
  position: absolute;
  left: 62px;
  top: -9px;
  width: 34px;
  height: 34px;
  border-radius: 50%;
  background: #e2513f;
  color: #fff;
  font-size: 20px;
  font-weight: 400;
  display: flex;
  align-items: center;
  justify-content: center;
}
.dk-sep { width: 2px; height: 82px; flex: none; margin: -1px 23px 0 24px; background: #565a70; }
.dk-post { width: 90px; }
.dk-post svg { width: 80px; height: 80px; margin-top: -3px; }
.dk-ws svg { width: 92px; height: 92px; margin-top: -13px; }
.dk-ppt svg { width: 84px; height: 74px; margin-top: 2px; }
.dk-sep2 { margin: -1px 30px 0 25px; }
.dk-trash { width: 66px; margin-left: 4px; }
.dk-trash svg { width: 66px; height: 86px; margin-top: -6px; }
.ws-t { font-family: "Liberation Sans", sans-serif; font-weight: 700; font-size: 27px; fill: #fff; }
.ppt-t { font-family: "Liberation Sans", sans-serif; font-weight: 700; font-size: 34px; fill: #fff; }
```
